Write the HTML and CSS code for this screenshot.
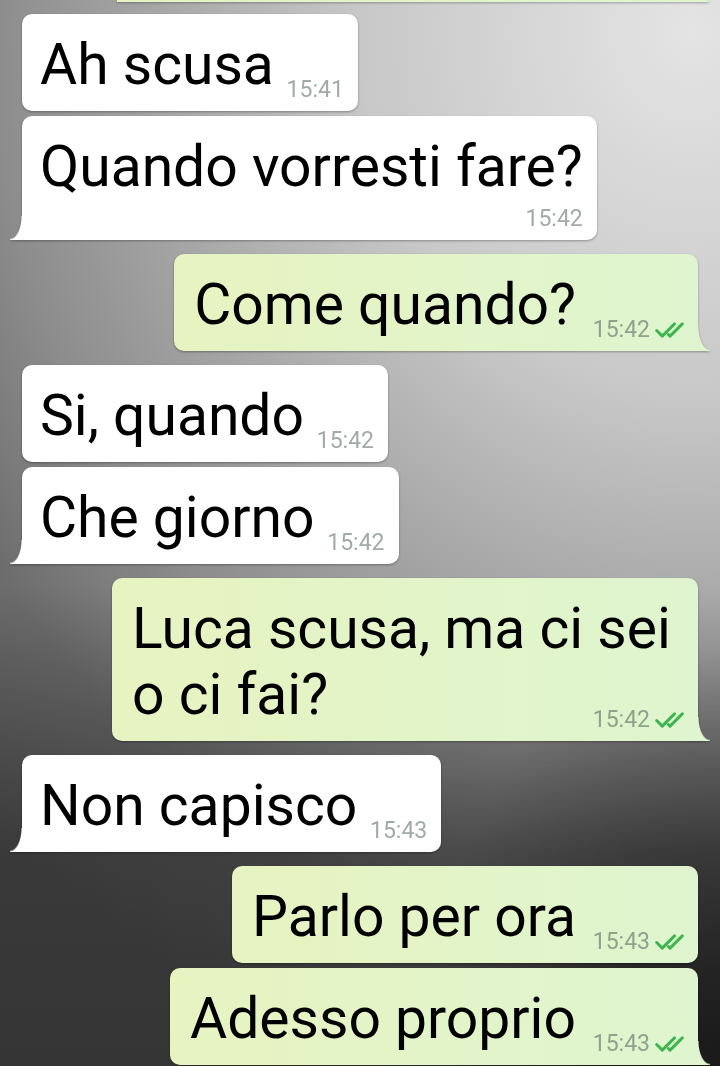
FILE: index.html
```html
<!DOCTYPE html>
<html>
<head>
  <meta charset="utf-8">
  <meta name="viewport" content="width=device-width">
  <title>Chat</title>
  <link rel="stylesheet" href="styles.css">
</head>
<body>
  <div class="chat">
    <div class="bubble out tail cut"></div>

    <div class="bubble in first-top">
      <span class="text">Ah scusa</span>
      <span class="meta"><span class="time">15:41</span></span>
    </div>
    <div class="bubble in tail stacked">
      <span class="text">Quando vorresti fare?</span>
      <span class="meta"><span class="time">15:42</span></span>
    </div>

    <div class="bubble out tail group">
      <span class="text">Come quando?</span>
      <span class="meta"><span class="time">15:42</span><svg class="ticks" viewBox="0 0 26 14"><path d="M1.5 7.5 L6.5 12.5 L17.5 1.5 M12 11 L13.5 12.5 L24.5 1.5"/></svg></span>
    </div>

    <div class="bubble in group">
      <span class="text">Si, quando</span>
      <span class="meta"><span class="time">15:42</span></span>
    </div>
    <div class="bubble in tail">
      <span class="text">Che giorno</span>
      <span class="meta"><span class="time">15:42</span></span>
    </div>

    <div class="bubble out tail group">
      <span class="text"><span>Luca scusa, ma ci sei</span> <span>o ci fai?</span></span>
      <span class="meta"><span class="time">15:42</span><svg class="ticks" viewBox="0 0 26 14"><path d="M1.5 7.5 L6.5 12.5 L17.5 1.5 M12 11 L13.5 12.5 L24.5 1.5"/></svg></span>
    </div>

    <div class="bubble in tail group">
      <span class="text">Non capisco</span>
      <span class="meta"><span class="time">15:43</span></span>
    </div>

    <div class="bubble out group">
      <span class="text">Parlo per ora</span>
      <span class="meta"><span class="time">15:43</span><svg class="ticks" viewBox="0 0 26 14"><path d="M1.5 7.5 L6.5 12.5 L17.5 1.5 M12 11 L13.5 12.5 L24.5 1.5"/></svg></span>
    </div>
    <div class="bubble out tail">
      <span class="text">Adesso proprio</span>
      <span class="meta"><span class="time">15:43</span><svg class="ticks" viewBox="0 0 26 14"><path d="M1.5 7.5 L6.5 12.5 L17.5 1.5 M12 11 L13.5 12.5 L24.5 1.5"/></svg></span>
    </div>
  </div>
</body>
</html>
```

FILE: styles.css
```css
html, body {
  margin: 0;
  padding: 0;
}

body {
  height: 1066px;
  overflow: hidden;
  font-family: Roboto, 'Noto Sans', sans-serif;
  color: #000;
  background:
    radial-gradient(ellipse 300px 420px at 100% 100%, rgba(0,0,0,0.55), rgba(0,0,0,0)),
    linear-gradient(to bottom, rgba(0,0,0,0) 55%, rgba(0,0,0,0.4) 80%, rgba(0,0,0,0.45) 100%),
    radial-gradient(ellipse 1000px 1100px at 96% 3%, #e4e4e4 0%, #c8c8c8 33%, #8c8c8c 70%, #6c6c6c 85%, #606060 100%);
}

.chat {
  display: flex;
  flex-direction: column;
}

.bubble {
  position: relative;
  display: grid;
  max-width: 552px;
  padding: 18px 14px 13px 18px;
  border-radius: 10px;
  filter: drop-shadow(0 1px 1px rgba(0,0,0,0.32));
  margin-top: 5px;
}

.bubble.group {
  margin-top: 14px;
}

.bubble.first-top {
  margin-top: 12px;
}

.in {
  align-self: flex-start;
  margin-left: 22px;
  background: #fff;
}

.out {
  align-self: flex-end;
  margin-right: 22px;
  padding-left: 20px;
  background: linear-gradient(to right, #e7f3c1, #dff5cf);
}

.text,
.meta {
  grid-area: 1 / 1;
}

.text {
  font-size: 57px;
  line-height: 66px;
}

/* keeps room for the time on the last line */
.text::after {
  content: "";
  display: inline-block;
  width: 70px;
}

.out .text::after {
  width: 108px;
}

.meta {
  justify-self: end;
  align-self: end;
  display: flex;
  align-items: flex-end;
  gap: 5px;
  font-size: 23px;
  line-height: 16px;
  color: #a1aaa6;
}

.out .meta {
  color: #8fa28b;
}

.stacked .meta {
  grid-area: 2 / 1;
  margin-top: 11px;
}

.stacked .text::after {
  display: none;
}

.ticks {
  width: 29px;
  height: 16px;
  fill: none;
  stroke: #3db54e;
  stroke-width: 2.6;
  stroke-linecap: round;
  stroke-linejoin: round;
}

.tail.in {
  border-bottom-left-radius: 0;
}

.tail.out {
  border-bottom-right-radius: 0;
}

.tail::after {
  content: "";
  position: absolute;
  bottom: 0;
  width: 12px;
  height: 24px;
}

.tail.in::after {
  left: -12px;
  background: radial-gradient(12px 24px at 0 0, rgba(255,255,255,0) calc(100% - 1px), #fff 100%);
}

.tail.out::after {
  right: -12px;
  background: radial-gradient(12px 24px at 100% 0, rgba(223,245,207,0) calc(100% - 1px), #dff5cf 100%);
}

.cut {
  width: 581px;
  max-width: none;
  height: 2px;
  padding: 0;
  margin-top: 0;
  border-radius: 0;
}
```
